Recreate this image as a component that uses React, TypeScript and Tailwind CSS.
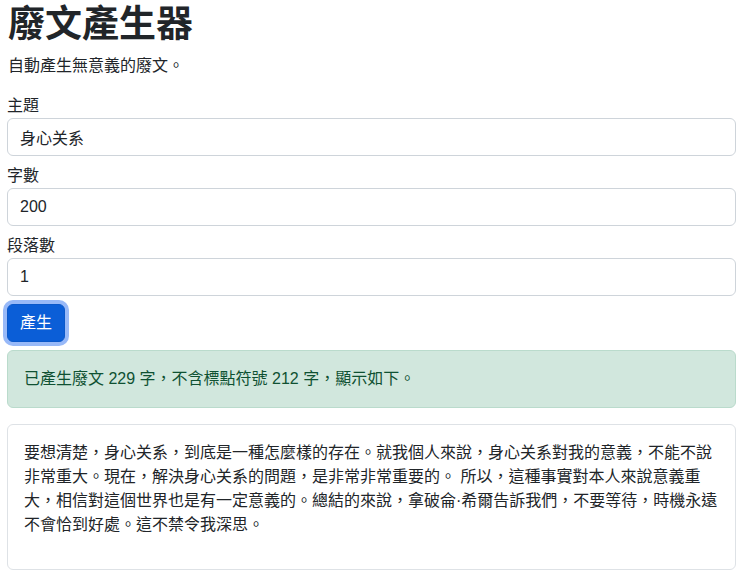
import { useState } from 'react';

const font = { fontFamily: '"Liberation Sans", "Noto Sans CJK TC", sans-serif' };

const output =
  '要想清楚，身心关系，到底是一種怎麼樣的存在。就我個人來說，身心关系對我的意義，不能不說非常重大。現在，解決身心关系的問題，是非常非常重要的。 所以，這種事實對本人來說意義重大，相信對這個世界也是有一定意義的。總結的來說，拿破侖·希爾告訴我們，不要等待，時機永遠不會恰到好處。這不禁令我深思。';

function Field({ label, value, onChange }: { label: string; value: string; onChange: (v: string) => void }) {
  return (
    <div className="mb-2">
      <label className="block text-base leading-6">{label}</label>
      <input
        className="block w-full h-[38px] px-3 text-base leading-6 text-[#212529] bg-white border border-[#ced4da] rounded-[6px] outline-none"
        value={value}
        onChange={(e) => onChange(e.target.value)}
      />
    </div>
  );
}

export default function App() {
  const [topic, setTopic] = useState('身心关系');
  const [count, setCount] = useState('200');
  const [paras, setParas] = useState('1');

  return (
    <div className="min-h-screen bg-white text-[#212529] pl-[7px] pr-[4px]" style={font}>
      <h1 className="text-[37px] font-bold leading-[43px] pt-[3px] mb-2 pl-px">廢文產生器</h1>
      <p className="text-base leading-6 mb-4 pl-px">自動產生無意義的廢文。</p>

      <Field label="主題" value={topic} onChange={setTopic} />
      <Field label="字數" value={count} onChange={setCount} />
      <Field label="段落數" value={paras} onChange={setParas} />

      <button className="mb-2 h-[38px] px-3 text-base leading-6 text-white bg-[#0b5ed7] border border-[#0a58ca] rounded-[6px] ring-4 ring-[#98b9f8]">
        產生
      </button>

      <div className="mb-4 p-4 text-base leading-6 text-[#0f5132] bg-[#d1e7dd] border border-[#badbcc] rounded-[6px]">
        已產生廢文 229 字，不含標點符號 212 字，顯示如下。
      </div>

      <div className="p-4 border border-[#dee2e6] rounded-[6px]">
        <p className="mb-4 text-base leading-6">{output}</p>
      </div>
    </div>
  );
}
